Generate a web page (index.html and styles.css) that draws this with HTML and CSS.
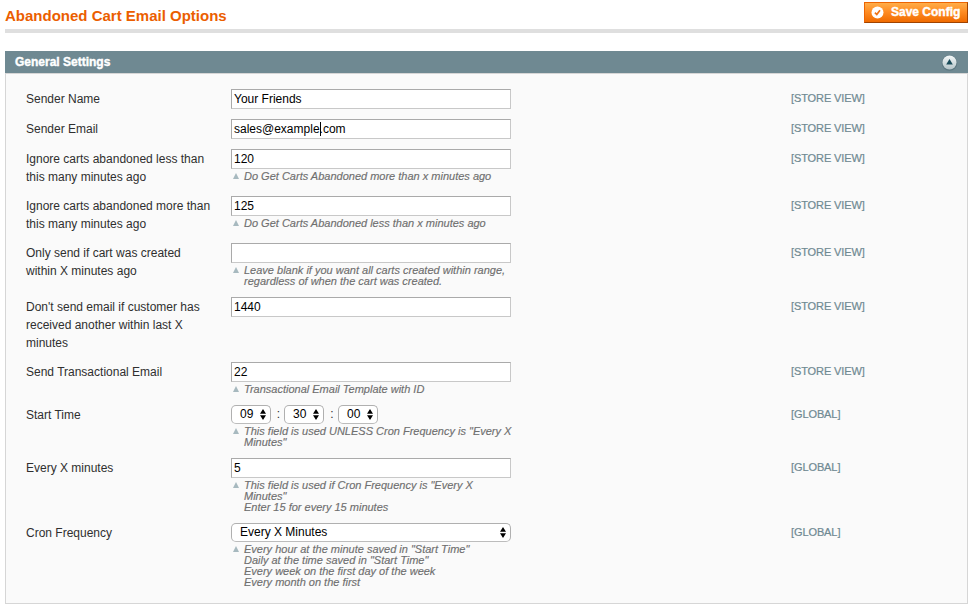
FILE: index.html
```html
<!DOCTYPE html>
<html lang="en">
<head>
<meta charset="utf-8">
<title>Abandoned Cart Email Options</title>
<link rel="stylesheet" href="styles.css">
</head>
<body>
<svg class="defs" width="0" height="0"><defs>
<symbol id="arrows" viewBox="0 0 6 11"><path d="M3 0 6 4.8H0zM0 6.2h6L3 11z" fill="#000"/></symbol>
</defs></svg>
<header class="page-head">
  <h1>Abandoned Cart Email Options</h1>
  <button class="save"><svg width="13" height="13" viewBox="0 0 13 13"><circle cx="6.5" cy="6.5" r="6" fill="#fff"/><path d="M3.9 6.6 5.8 8.5 9 4.3" fill="none" stroke="#ef7416" stroke-width="1.7"/></svg><span>Save Config</span></button>
</header>
<section class="panel">
  <div class="panel-head"><h2>General Settings</h2>
    <svg width="17" height="17" viewBox="0 0 17 17"><defs><linearGradient id="knob" x2="0" y2="1"><stop stop-color="#f4f8f8"/><stop offset="1" stop-color="#b5c5c9"/></linearGradient></defs><circle cx="8.5" cy="9" r="7.8" fill="#5b7780"/><circle cx="8.5" cy="8.5" r="7" fill="url(#knob)"/><path d="M8.5 5 11.8 10.5H5.2z" fill="#194b59"/></svg>
  </div>
  <div class="fields">
    <div class="row h30"><label>Sender Name</label><div class="value"><div class="input">Your Friends</div></div><span class="scope">[STORE VIEW]</span></div>
    <div class="row h30"><label>Sender Email</label><div class="value"><div class="input">sales@example<i class="caret"></i>.com</div></div><span class="scope">[STORE VIEW]</span></div>
    <div class="row h47"><label>Ignore carts abandoned less than<br>this many minutes ago</label><div class="value"><div class="input">120</div><p class="note">Do Get Carts Abandoned more than x minutes ago</p></div><span class="scope">[STORE VIEW]</span></div>
    <div class="row h47"><label>Ignore carts abandoned more than<br>this many minutes ago</label><div class="value"><div class="input">125</div><p class="note">Do Get Carts Abandoned less than x minutes ago</p></div><span class="scope">[STORE VIEW]</span></div>
    <div class="row h54"><label>Only send if cart was created<br>within X minutes ago</label><div class="value"><div class="input"></div><p class="note">Leave blank if you want all carts created within range,<br>regardless of when the cart was created.</p></div><span class="scope">[STORE VIEW]</span></div>
    <div class="row h65"><label>Don't send email if customer has<br>received another within last X<br>minutes</label><div class="value"><div class="input">1440</div></div><span class="scope">[STORE VIEW]</span></div>
    <div class="row h43"><label>Send Transactional Email</label><div class="value"><div class="input">22</div><p class="note">Transactional Email Template with ID</p></div><span class="scope">[STORE VIEW]</span></div>
    <div class="row h53"><label>Start Time</label><div class="value"><div class="time"><div class="select">09<svg><use href="#arrows"/></svg></div><b>:</b><div class="select">30<svg><use href="#arrows"/></svg></div><b class="last">:</b><div class="select">00<svg><use href="#arrows"/></svg></div></div><p class="note">This field is used UNLESS Cron Frequency is "Every X<br>Minutes"</p></div><span class="scope">[GLOBAL]</span></div>
    <div class="row h65"><label>Every X minutes</label><div class="value"><div class="input">5</div><p class="note">This field is used if Cron Frequency is "Every X<br>Minutes"<br>Enter 15 for every 15 minutes</p></div><span class="scope">[GLOBAL]</span></div>
    <div class="row"><label>Cron Frequency</label><div class="value"><div class="select wide">Every X Minutes<svg><use href="#arrows"/></svg></div><p class="note">Every hour at the minute saved in "Start Time"<br>Daily at the time saved in "Start Time"<br>Every week on the first day of the week<br>Every month on the first</p></div><span class="scope">[GLOBAL]</span></div>
  </div>
</section>
</body>
</html>
```
FILE: styles.css
```css
* { box-sizing: border-box; }
body { margin: 0; padding: 0 1px 0 5px; height: 605px; overflow: hidden; background: #fff; font: 12px/18px "Liberation Sans", Arial, sans-serif; color: #2f2f2f; }
h1, h2, p { margin: 0; }
.defs { position: absolute; }
.page-head { display: flex; justify-content: space-between; align-items: flex-start; height: 33px; border-bottom: 4px solid #dfdfdf; }
h1 { padding-top: 6px; font-size: 15px; line-height: 20px; color: #eb5e00; white-space: nowrap; }
.save { display: flex; align-items: center; gap: 7px; width: 104px; height: 21px; margin-top: 2px; padding: 0 0 1px 6px; border: 1px solid; border-color: #ed6502 #a04300 #a04300 #ed6502; background: linear-gradient(#ffad49, #ff8d24 45%, #f06b00); color: #fff; font: bold 12px/18px "Liberation Sans", Arial, sans-serif; white-space: nowrap; -webkit-text-stroke: .4px #fff; }
.save svg { flex: none; }
.panel { margin-top: 18px; }
.panel-head { display: flex; justify-content: space-between; align-items: center; height: 22px; padding: 0 10px; background: #6f8992; }
h2 { font-size: 12px; line-height: 18px; color: #fff; -webkit-text-stroke: .4px #fff; }
.fields { height: 531px; padding: 15px 0 0 20px; border: 1px solid #d6d6d6; background: #fafafa; }
.row { display: grid; grid-template-columns: 205px 560px 1fr; align-items: start; }
.h30 { height: 30px; }
.h43 { height: 43px; }
.h47 { height: 47px; }
.h53 { height: 53px; }
.h54 { height: 54px; }
.h65 { height: 65px; }
label { padding-top: 1px; white-space: nowrap; }
.input { display: flex; align-items: center; width: 280px; height: 20px; padding: 0 2px; border: 1px solid; border-color: #aaa #c8c8c8 #c8c8c8 #aaa; background: #fff; color: #000; }
.caret { width: 1px; height: 14px; margin-right: -1px; background: #000; }
.note { position: relative; width: 290px; padding: 2px 0 0 13px; font-size: 11px; font-style: italic; line-height: 11px; color: #6f6f6f; white-space: nowrap; -webkit-text-stroke: .15px #6f6f6f; }
.note::before { content: ""; position: absolute; left: 2px; top: 4px; border: solid transparent; border-width: 0 3.5px 6px; border-bottom-color: #a7b9bf; }
.time { display: flex; }
.time b { width: 13px; padding-left: 2px; text-align: center; font-weight: normal; }
.time .last { width: 14px; }
.select { display: flex; justify-content: space-between; align-items: center; width: 40px; height: 19px; padding: 0 4px 1px 8px; border: 1px solid #b0b0b0; border-bottom-color: #bcbcbc; border-radius: 5px; background: #fff; color: #000; }
.select svg { flex: none; width: 6px; height: 11px; margin-top: 1px; }
.wide { width: 280px; }
.scope { font-size: 11px; letter-spacing: -.1px; color: #6f8992; white-space: nowrap; -webkit-text-stroke: .2px #6f8992; }
```
